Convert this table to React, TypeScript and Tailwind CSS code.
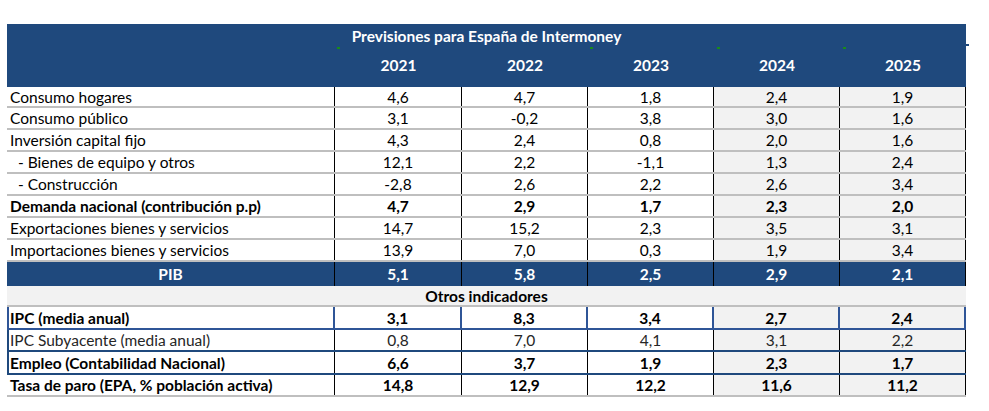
import React from "react";

type Row = {
  label: string;
  vals: string[];
  bold?: boolean;
  indent?: boolean;
  h: string;
};

const rows: Row[] = [
  { label: "Consumo hogares", vals: ["4,6", "4,7", "1,8", "2,4", "1,9"], h: "h-[21px]" },
  { label: "Consumo público", vals: ["3,1", "-0,2", "3,8", "3,0", "1,6"], h: "h-[22px]" },
  { label: "Inversión capital fijo", vals: ["4,3", "2,4", "0,8", "2,0", "1,6"], h: "h-[22px]" },
  { label: "- Bienes de equipo y otros", vals: ["12,1", "2,2", "-1,1", "1,3", "2,4"], indent: true, h: "h-[22px]" },
  { label: "- Construcción", vals: ["-2,8", "2,6", "2,2", "2,6", "3,4"], indent: true, h: "h-[22px]" },
  { label: "Demanda nacional (contribución p.p)", vals: ["4,7", "2,9", "1,7", "2,3", "2,0"], bold: true, h: "h-[22px]" },
  { label: "Exportaciones bienes y servicios", vals: ["14,7", "15,2", "2,3", "3,5", "3,1"], h: "h-[22px]" },
  { label: "Importaciones bienes y servicios", vals: ["13,9", "7,0", "0,3", "1,9", "3,4"], h: "h-[22px]" },
];

const colW = ["w-[127px]", "w-[126px]", "w-[126px]", "w-[126px]", "w-[126px]"];

function DataRow({ r }: { r: Row }) {
  return (
    <div className={`flex ${r.h} border-b-2 border-[#bfbfbf]`}>
      <div
        className={`w-[328px] flex items-center pt-[2px] border-r border-black ${r.indent ? "pl-[11px]" : "pl-[3px]"} ${r.bold ? "font-bold" : ""}`}
      >
        {r.label}
      </div>
      {r.vals.map((v, i) => (
        <div
          key={i}
          className={`${colW[i]} flex items-center justify-center pt-[2px] border-r border-black ${i >= 3 ? "bg-[#f2f2f2]" : "bg-white"} ${r.bold ? "font-bold" : ""}`}
        >
          {v}
        </div>
      ))}
    </div>
  );
}

const years = ["2021", "2022", "2023", "2024", "2025"];

export default function App() {
  return (
    <div
      className="w-[989px] h-[411px] bg-white pt-[24px] pl-[7px] text-[15.5px] text-black leading-none"
      style={{ fontFamily: "Lato, 'Open Sans', sans-serif" }}
    >
      <div className="relative w-[959px]">
        {/* header */}
        <div className="h-[63px] bg-[#1f497d] text-white font-bold flex flex-col">
          <div className="h-[23px] flex items-center justify-center pt-[2px]">
            Previsiones para España de Intermoney
          </div>
          <div className="flex flex-1 items-center pl-[328px] pb-[3px]">
            {years.map((y, i) => (
              <div key={y} className={`${colW[i]} text-center`}>
                {y}
              </div>
            ))}
          </div>
        </div>
        {/* comment markers */}
        <div className="absolute left-[330px] top-[23px] w-[3px] h-[2px] bg-[#1a8a1a]" />
        <div className="absolute left-[583px] top-[23px] w-[3px] h-[2px] bg-[#1a8a1a]" />
        <div className="absolute left-[710px] top-[23px] w-[3px] h-[2px] bg-[#1a8a1a]" />
        <div className="absolute left-[836px] top-[23px] w-[3px] h-[2px] bg-[#1a8a1a]" />
        <div className="absolute left-[959px] top-[20px] w-[3px] h-[2px] bg-[#1f497d]" />

        {rows.map((r) => (
          <DataRow key={r.label} r={r} />
        ))}

        {/* PIB */}
        <div className="flex h-[24px] bg-[#1f497d] text-white font-bold">
          <div className="w-[328px] flex items-center justify-center pt-[2px] border-r border-black">PIB</div>
          {["5,1", "5,8", "2,5", "2,9", "2,1"].map((v, i) => (
            <div key={i} className={`${colW[i]} flex items-center justify-center pt-[2px] border-r border-black`}>
              {v}
            </div>
          ))}
        </div>

        {/* Otros indicadores */}
        <div className="h-[21px] bg-[#f2f2f2] border-b-2 border-[#bfbfbf] flex items-center justify-center pt-[2px] font-bold">
          Otros indicadores
        </div>

        {/* IPC */}
        <div className="flex h-[23px] border-b-2 border-[#2f5597] border-l-2 font-bold">
          <div className="w-[326px] flex items-center pt-[2px] pl-[1px] border-r-2 border-[#2f5597]">IPC (media anual)</div>
          {["3,1", "8,3", "3,4", "2,7", "2,4"].map((v, i) => (
            <div
              key={i}
              className={`${colW[i]} flex items-center justify-center pt-[2px] border-r-2 border-[#2f5597] ${i >= 3 ? "bg-[#f2f2f2]" : "bg-white"}`}
            >
              {v}
            </div>
          ))}
        </div>

        {/* IPC Subyacente */}
        <div className="flex h-[22px] border-b-2 border-[#1f497d] border-l-2 text-[#262626]">
          <div className="w-[326px] flex items-center pt-[2px] pl-[1px] border-r border-black">IPC Subyacente (media anual)</div>
          {["0,8", "7,0", "4,1", "3,1", "2,2"].map((v, i) => (
            <div
              key={i}
              className={`${colW[i]} flex items-center justify-center pt-[2px] border-r border-black ${i >= 3 ? "bg-[#f2f2f2]" : "bg-white"}`}
            >
              {v}
            </div>
          ))}
        </div>

        {/* Empleo */}
        <div className="flex h-[23px] border-b-2 border-[#1f497d] border-l-2 font-bold">
          <div className="w-[326px] flex items-center pt-[2px] pl-[1px] border-r border-black">Empleo (Contabilidad Nacional)</div>
          {["6,6", "3,7", "1,9", "2,3", "1,7"].map((v, i) => (
            <div
              key={i}
              className={`${colW[i]} flex items-center justify-center pt-[2px] border-r border-black ${i >= 3 ? "bg-[#f2f2f2]" : "bg-white"}`}
            >
              {v}
            </div>
          ))}
        </div>

        {/* Tasa de paro */}
        <div className="flex h-[22px] border-b-2 border-[#bfbfbf] font-bold">
          <div className="w-[328px] flex items-center pt-[2px] pl-[3px] border-r border-black">
            Tasa de paro (EPA, % población activa)
          </div>
          {["14,8", "12,9", "12,2", "11,6", "11,2"].map((v, i) => (
            <div
              key={i}
              className={`${colW[i]} flex items-center justify-center pt-[2px] border-r border-black ${i >= 3 ? "bg-[#f2f2f2]" : "bg-white"}`}
            >
              {v}
            </div>
          ))}
        </div>
      </div>
    </div>
  );
}
